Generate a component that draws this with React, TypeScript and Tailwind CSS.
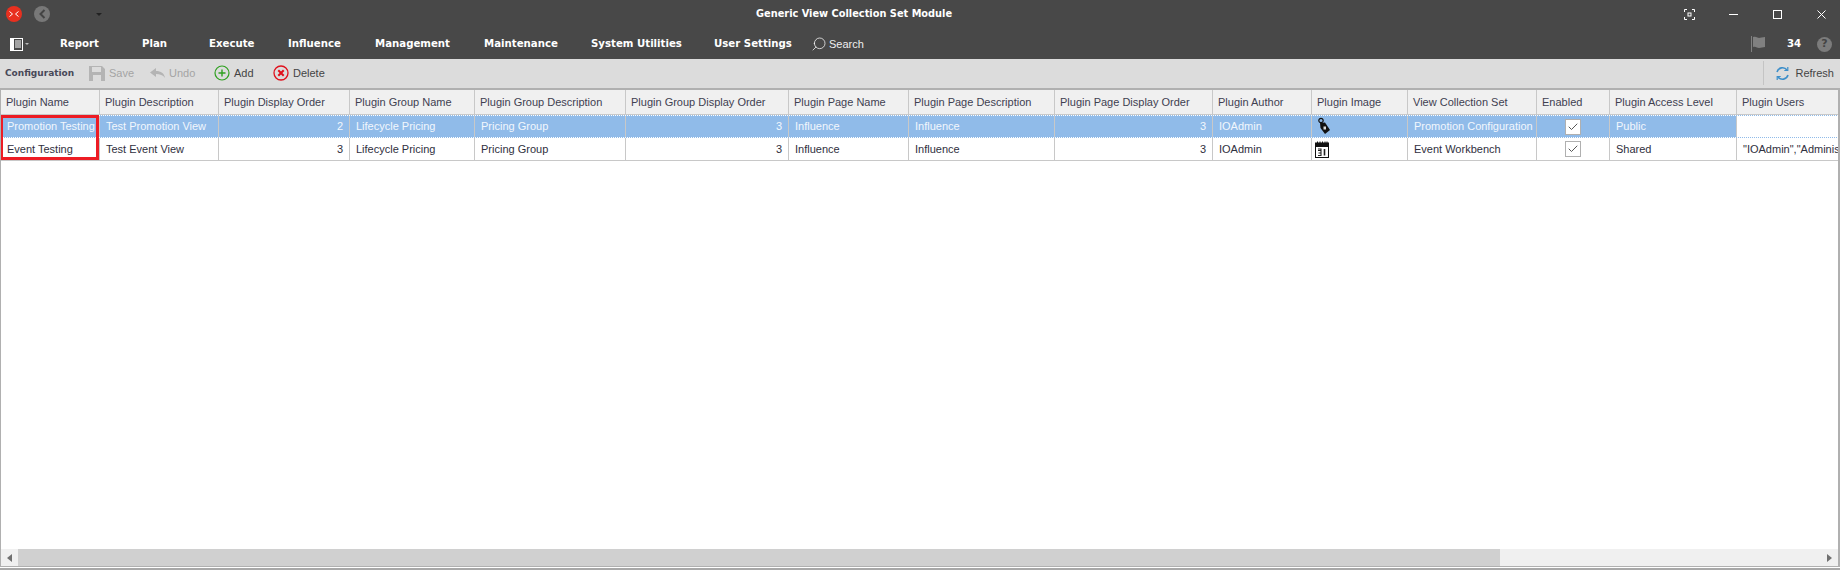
import { Check, Search } from "lucide-react";

const font = "font-['Liberation_Sans','Noto_Sans',sans-serif]";
const boldFont = "font-['DejaVu_Sans',sans-serif] font-bold";

const gridCols =
  "grid-cols-[99px_119px_131px_125px_151px_163px_120px_146px_158px_99px_96px_129px_73px_127px_109px]";

const columns = [
  "Plugin Name",
  "Plugin Description",
  "Plugin Display Order",
  "Plugin Group Name",
  "Plugin Group Description",
  "Plugin Group Display Order",
  "Plugin Page Name",
  "Plugin Page Description",
  "Plugin Page Display Order",
  "Plugin Author",
  "Plugin Image",
  "View Collection Set",
  "Enabled",
  "Plugin Access Level",
  "Plugin Users",
];

type Row = {
  name: string;
  description: string;
  order: number;
  view: string;
  access: string;
  users: string;
  image: "tag" | "calendar";
};

const rows: Row[] = [
  {
    name: "Promotion Testing",
    description: "Test Promotion View",
    order: 2,
    view: "Promotion Configuration",
    access: "Public",
    users: "",
    image: "tag",
  },
  {
    name: "Event Testing",
    description: "Test Event View",
    order: 3,
    view: "Event Workbench",
    access: "Shared",
    users: '"IOAdmin","Administrator"',
    image: "calendar",
  },
];

const navItems = [
  { label: "Report", className: "w-[82px]" },
  { label: "Plan", className: "w-[67px]" },
  { label: "Execute", className: "w-[79px]" },
  { label: "Influence", className: "w-[87px]" },
  { label: "Management", className: "w-[109px]" },
  { label: "Maintenance", className: "w-[107px]" },
  { label: "System Utilities", className: "w-[123px]" },
  { label: "User Settings", className: "w-[97px]" },
];

function TagIcon() {
  return (
    <svg width="14" height="18" viewBox="0 0 14 18" className="mt-[-1px] ml-[-1px]">
      <circle cx="4" cy="3.5" r="2.2" fill="none" stroke="#111" strokeWidth="1.2" />
      <path d="M3 6 L8 5.5 L13 13 L8 17 L3.5 11 Z" fill="#111" />
      <rect x="6.5" y="9.5" width="2.5" height="3" fill="#ddd" />
    </svg>
  );
}

function CalendarIcon() {
  return (
    <svg width="14" height="17" viewBox="0 0 14 17" className="ml-[-3px]">
      <rect x="0.5" y="2" width="13" height="14.5" fill="#fff" stroke="#111" />
      <rect x="0.5" y="2" width="13" height="4" fill="#111" />
      <path d="M2.5 0.5v3M5 0.5v3M7.5 0.5v3M10 0.5v3M12 0.5v3" stroke="#111" />
      <path d="M3 8h3v1.5h-3M6 9.5v5h-3M3.5 12h2" fill="none" stroke="#222" strokeWidth="1.1" />
      <path d="M9.5 8v6.5" stroke="#222" strokeWidth="1.6" />
    </svg>
  );
}

function CheckBox() {
  return (
    <span className="flex h-[16px] w-[16px] items-center justify-center border border-[#b0b0b0] bg-white">
      <Check size={12} strokeWidth={1.8} className="text-[#444]" />
    </span>
  );
}

function Cell({
  children,
  right,
  center,
  selected,
}: {
  children?: React.ReactNode;
  right?: boolean;
  center?: boolean;
  selected?: boolean;
}) {
  return (
    <div
      className={`flex items-center overflow-hidden whitespace-nowrap border-r border-[#c8c8c8] px-[6px] ${
        right ? "justify-end" : ""
      } ${center ? "justify-center" : ""} ${selected ? "text-[#f2f7fd]" : "text-[#303040]"}`}
    >
      {children}
    </div>
  );
}

export default function App() {
  return (
    <div className={`flex h-[570px] w-[1840px] flex-col overflow-hidden bg-white text-[11px] ${font}`}>
      {/* title bar + menu */}
      <header className="h-[59px] shrink-0 bg-[#484848] text-white">
        <div className="flex h-[28px] items-center pl-[6px]">
          <span className="flex h-[16px] w-[16px] items-center justify-center rounded-full bg-[#e8301f]">
            <svg width="10" height="6" viewBox="0 0 10 6" fill="none" stroke="#fff" strokeWidth="1">
              <path d="M0.5 0.5L3.5 3L0.5 5.5M9.5 0.5L6.5 3L9.5 5.5" />
            </svg>
          </span>
          <span className="ml-[12px] flex h-[16px] w-[16px] items-center justify-center rounded-full bg-[#787878]">
            <svg width="7" height="10" viewBox="0 0 7 10" fill="none" stroke="#444" strokeWidth="2">
              <path d="M5.5 1L1.5 5L5.5 9" />
            </svg>
          </span>
          <span className="ml-[46px] h-0 w-0 border-x-[3px] border-t-[3px] border-x-transparent border-t-[#222]" />
          <span className={`ml-[654px] text-[9.8px] ${boldFont}`}>Generic View Collection Set Module</span>
          <div className="ml-auto flex items-center">
            <span className="flex w-[44px] justify-center">
              <svg width="11" height="11" viewBox="0 0 11 11" fill="none" stroke="#fff">
                <path d="M0.5 3V0.5H3M8 0.5H10.5V3M10.5 8V10.5H8M3 10.5H0.5V8" />
                <rect x="4" y="4" width="3" height="3" />
              </svg>
            </span>
            <span className="flex w-[44px] justify-center">
              <svg width="9" height="9" viewBox="0 0 9 9" stroke="#fff">
                <path d="M0 4.5H9" />
              </svg>
            </span>
            <span className="flex w-[44px] justify-center">
              <svg width="9" height="9" viewBox="0 0 9 9" fill="none" stroke="#fff">
                <rect x="0.5" y="0.5" width="8" height="8" />
              </svg>
            </span>
            <span className="flex w-[41px] justify-center pl-[3px]">
              <svg width="9" height="9" viewBox="0 0 9 9" fill="none" stroke="#fff">
                <path d="M0.5 0.5L8.5 8.5M8.5 0.5L0.5 8.5" />
              </svg>
            </span>
          </div>
        </div>
        <nav className="flex h-[31px] items-center pt-[1px]">
          <span className="ml-[10px] flex w-[50px] items-center">
            <svg width="13" height="13" viewBox="0 0 13 13">
              <rect x="0.5" y="0.5" width="12" height="12" fill="#484848" stroke="#fff" />
              <rect x="1" y="1" width="3" height="11" fill="#fff" />
              <path d="M5 3h6M5 5h6M5 7h6M5 9h6" stroke="#fff" />
            </svg>
            <span className="ml-[2px] h-0 w-0 border-x-[2px] border-t-[2px] border-x-transparent border-t-[#bbb]" />
          </span>
          {navItems.map((item) => (
            <span key={item.label} className={`${item.className} text-[10.2px] ${boldFont} whitespace-nowrap`}>
              {item.label}
            </span>
          ))}
          <Search size={16} strokeWidth={1.1} className="-scale-x-100" />
          <span className="ml-[2px] text-[#eee]">Search</span>
          <div className="ml-auto flex items-center">
            <svg width="16" height="16" viewBox="0 0 16 16" fill="#808080">
              <path d="M1 0h1v16H1z" />
              <path d="M3 1c3-1 5 1 6 1s4-1 6-1v10c-2 0-4 1-6 1s-3-2-6-1z" />
            </svg>
            <span className={`ml-[21px] w-[16px] text-[10.2px] ${boldFont}`}>34</span>
            <span className={`ml-[14px] mr-[8px] flex h-[15px] w-[15px] items-center justify-center rounded-full bg-[#7c7c7c] text-[11px] text-[#444] ${boldFont}`}>
              ?
            </span>
          </div>
        </nav>
      </header>

      {/* toolbar */}
      <div className="flex h-[29px] shrink-0 items-center bg-[#dcdcdc] pb-[1px] pl-[5px] text-[#555]">
        <span className={`mt-[1px] w-[84px] text-[9px] text-[#484858] ${boldFont}`}>Configuration</span>
        <svg width="16" height="16" viewBox="0 0 16 16" fill="#b4b4b4">
          <path d="M0 1h13l3 3v12H0zM3 2v5h9V2zM4 10v6h8v-6z" fillRule="evenodd" />
        </svg>
        <span className="ml-[4px] w-[41px] text-[#a4a4a4]">Save</span>
        <svg width="15" height="10" viewBox="0 0 15 10" fill="#b4b4b4">
          <path d="M0 4.5L6 0v3c5 0 8 2 9 7-2-3-5-4-9-4v3z" />
        </svg>
        <span className="ml-[4px] w-[45px] text-[#a4a4a4]">Undo</span>
        <svg width="16" height="16" viewBox="0 0 16 16" fill="none" stroke="#2ea01f">
          <circle cx="8" cy="8" r="7" strokeWidth="1.2" />
          <path d="M8 4.5v7M4.5 8h7" strokeWidth="1.4" />
        </svg>
        <span className="ml-[4px] w-[39px] text-[#444]">Add</span>
        <svg width="16" height="16" viewBox="0 0 16 16" fill="none" stroke="#e0101c">
          <circle cx="8" cy="8" r="7" strokeWidth="1.3" />
          <path d="M5.3 5.3l5.4 5.4M10.7 5.3l-5.4 5.4" strokeWidth="2" />
        </svg>
        <span className="ml-[4px] text-[#444]">Delete</span>
        <div className="ml-auto flex h-[24px] items-center border-l border-[#c4c4c4] pl-[11px] pr-[6px]">
          <svg width="15" height="15" viewBox="0 0 15 15" fill="none" stroke="#3d8fca" strokeWidth="1.6">
            <path d="M2 6a5.7 5.7 0 0 1 10-2M13 9a5.7 5.7 0 0 1-10 2" />
            <path d="M12.8 1v3.5H9.3M2.2 14v-3.5h3.5" strokeWidth="1.2" />
          </svg>
          <span className="ml-[5px] text-[#444]">Refresh</span>
        </div>
      </div>

      {/* grid */}
      <div className="flex min-h-0 flex-1 flex-col border-x border-b border-t-2 border-[#b0b0b0] border-r-2">
        <div className="min-h-0 flex-1 overflow-hidden">
          <div className={`grid h-[25px] border-b border-[#c8c8c8] bg-[#f0f0f0] ${gridCols}`}>
            {columns.map((col) => (
              <div
                key={col}
                className="flex items-center overflow-hidden whitespace-nowrap border-r border-[#c8c8c8] px-[5px] text-[#404050]"
              >
                {col}
              </div>
            ))}
          </div>
          <div className="relative">
            {rows.map((row, i) => {
              const sel = i === 0;
              return (
                <div
                  key={row.name}
                  className={`grid h-[23px] ${gridCols} ${
                    sel
                      ? "border-y border-dotted border-white bg-[#90bbe9]"
                      : "border-b border-[#c8c8c8] bg-white"
                  }`}
                >
                  <Cell selected={sel}>{row.name}</Cell>
                  <Cell selected={sel}>{row.description}</Cell>
                  <Cell selected={sel} right>{row.order}</Cell>
                  <Cell selected={sel}>Lifecycle Pricing</Cell>
                  <Cell selected={sel}>Pricing Group</Cell>
                  <Cell selected={sel} right>3</Cell>
                  <Cell selected={sel}>Influence</Cell>
                  <Cell selected={sel}>Influence</Cell>
                  <Cell selected={sel} right>3</Cell>
                  <Cell selected={sel}>IOAdmin</Cell>
                  <Cell selected={sel}>{row.image === "tag" ? <TagIcon /> : <CalendarIcon />}</Cell>
                  <Cell selected={sel}>{row.view}</Cell>
                  <Cell selected={sel} center><CheckBox /></Cell>
                  <Cell selected={sel}>{row.access}</Cell>
                  <div
                    className={`flex items-center overflow-hidden whitespace-nowrap px-[6px] text-[#303040] ${
                      sel ? "bg-white" : ""
                    }`}
                  >
                    {row.users}
                  </div>
                </div>
              );
            })}
            {/* annotation from the screenshot */}
            <div className="pointer-events-none absolute left-[-1px] top-0 h-[45px] w-[99px] border-[3px] border-[#ed1c24]" />
          </div>
        </div>
        <div className="flex h-[17px] shrink-0 bg-[#f0f0f0]">
          <span className="flex w-[17px] items-center justify-center">
            <span className="h-0 w-0 border-y-[4px] border-r-[5px] border-y-transparent border-r-[#707070]" />
          </span>
          <span className="w-[1482px] bg-[#d0d0d0]" />
          <span className="ml-auto flex w-[17px] items-center justify-center">
            <span className="h-0 w-0 border-y-[4px] border-l-[5px] border-y-transparent border-l-[#707070]" />
          </span>
        </div>
      </div>
      <div className="h-[3px] shrink-0 border-t border-white bg-[#a8a8a8]" />
    </div>
  );
}
